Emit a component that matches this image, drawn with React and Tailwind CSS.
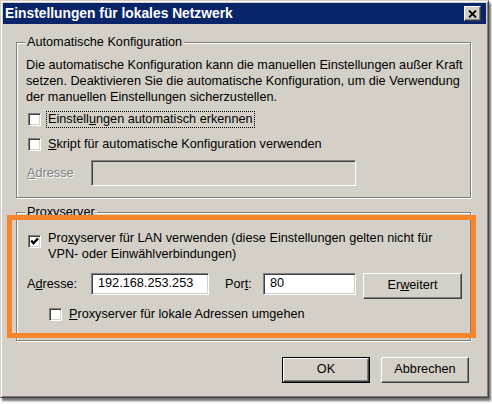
import React from "react";

const FONT = "font-['Liberation_Sans',Arial,sans-serif]";

function Check({ checked, className = "" }) {
  return (
    <span className={`${className} w-[13px] h-[13px] shrink-0 bg-white border border-t-[#808080] border-l-[#808080] border-b-white border-r-white shadow-[inset_1px_1px_0_#404040,inset_-1px_-1px_0_#d4d0c8] flex items-center justify-center`}>
      {checked && (
        <svg width="9" height="9" viewBox="0 0 9 9">
          <path d="M1.2 3.6 L3.5 6.2 L8 1.4" stroke="#000" strokeWidth="2.3" fill="none" />
        </svg>
      )}
    </span>
  );
}

function Group({ title, className, children }) {
  return (
    <div
      className={`relative border border-[#808080] shadow-[1px_1px_0_#fff,inset_1px_1px_0_#fff] ${className}`}
    >
      <span className="absolute -top-[8px] left-[8px] px-[2px] bg-[#d4d0c8] leading-[14px]">
        {title}
      </span>
      {children}
    </div>
  );
}

function Button({ children, def, className }) {
  return (
    <div className={`${className} ${def ? "border border-black" : ""} flex`}>
      <div className="flex-1 flex items-center justify-center bg-[#d4d0c8] border border-t-white border-l-white border-r-[#404040] border-b-[#404040] shadow-[inset_-1px_-1px_0_#808080]">
        {children}
      </div>
    </div>
  );
}

function Input({ value, disabled, className }) {
  return (
    <div
      className={`${className} ${disabled ? "bg-[#d4d0c8]" : "bg-white"} border border-t-[#808080] border-l-[#808080] border-b-white border-r-white shadow-[inset_1px_1px_0_#404040,inset_-1px_-1px_0_#d4d0c8] flex items-center pl-[6px]`}
    >
      {value}
    </div>
  );
}

export default function App() {
  return (
    <div className={`relative w-[492px] h-[404px] bg-white ${FONT} text-[12.7px] text-black`}>
      <div className="w-[489px] h-[398px] bg-[#d4d0c8] border border-[#404040] border-t-[#d4d0c8] border-l-[#d4d0c8] shadow-[inset_1px_1px_0_#fff,inset_-1px_-1px_0_#808080,2px_3px_2px_rgba(0,0,0,0.55)] p-[2px] flex flex-col">
        {/* title bar */}
        <div className="h-[21px] bg-[#0a246a] flex items-center justify-between pl-[2px] pr-[5px]">
          <span className="text-white font-bold text-[13.8px] leading-none">
            Einstellungen für lokales Netzwerk
          </span>
          <div className="w-[17px] h-[15px] bg-[#d4d0c8] border border-t-white border-l-white border-r-[#404040] border-b-[#404040] shadow-[inset_-1px_-1px_0_#808080] flex items-center justify-center">
            <svg width="9" height="8" viewBox="0 0 9 8">
              <path d="M1 0.5 L8 7.5 M8 0.5 L1 7.5" stroke="#000" strokeWidth="1.8" />
            </svg>
          </div>
        </div>

        {/* body */}
        <div className="pl-[13px] flex flex-col">
          <Group title="Automatische Konfiguration" className="mt-[18px] w-[455px] h-[156px]">
            <p className="pl-[9px] pt-[14px] leading-[16px]">
              Die automatische Konfiguration kann die manuellen Einstellungen außer Kraft
              <br />
              setzen. Deaktivieren Sie die automatische Konfiguration, um die Verwendung
              <br />
              der manuellen Einstellungen sicherzustellen.
            </p>
            <div className="mt-[5px] h-[19px] pl-[11px] flex items-center gap-[5px]">
              <Check />
              <span className="border border-dotted border-black px-[1px] leading-[15px]">
                Einstell<u>u</u>ngen automatisch erkennen
              </span>
            </div>
            <div className="mt-[6px] h-[19px] pl-[11px] flex items-center gap-[5px]">
              <Check />
              <span className="border border-transparent px-[1px] leading-[15px]">
                <u>S</u>kript für automatische Konfiguration verwenden
              </span>
            </div>
            <div className="mt-[6px] pl-[10px] flex items-center">
              <span className="w-[64px] text-[#808080] [text-shadow:1px_1px_0_#fff] pt-[2px]">
                <u>A</u>dresse
              </span>
              <Input disabled className="w-[265px] h-[26px]" />
            </div>
          </Group>

          <Group title="Proxyserver" className="mt-[14px] w-[455px] h-[129px]">
            <div className="mt-[16px] pl-[11px] flex items-start gap-[5px]">
              <Check checked className="mt-[6px]" />
              <span className="border border-transparent px-[1px] leading-[16px]">
                Pro<u>x</u>yserver für LAN verwenden (diese Einstellungen gelten nicht für
                <br />
                VPN- oder Einwählverbindungen)
              </span>
            </div>
            <div className="mt-[10px] pl-[10px] flex items-start">
              <span className="w-[64px] leading-[22px]">
                A<u>d</u>resse:
              </span>
              <Input value="192.168.253.253" className="w-[118px] h-[22px]" />
              <span className="ml-[16px] w-[38px] leading-[22px]">
                Por<u>t</u>:
              </span>
              <Input value="80" className="w-[93px] h-[22px]" />
              <Button className="ml-[7px] w-[99px] h-[26px]">
                Er<u>w</u>eitert
              </Button>
            </div>
            <div className="mt-[6px] h-[19px] pl-[32px] flex items-center gap-[5px]">
              <Check />
              <span className="border border-transparent px-[1px] leading-[15px]">
                <u>P</u>roxyserver für lokale Adressen umgehen
              </span>
            </div>
          </Group>

          <div className="mt-[16px] w-[455px] pr-[2px] flex justify-end gap-[11px]">
            <Button def className="w-[88px] h-[26px]">OK</Button>
            <Button className="w-[88px] h-[26px]">Abbrechen</Button>
          </div>
        </div>
      </div>

      {/* orange annotation */}
      <div className="absolute left-[7px] top-[215px] w-[469px] h-[123px] border-[5px] border-[#f7852b]" />
    </div>
  );
}
